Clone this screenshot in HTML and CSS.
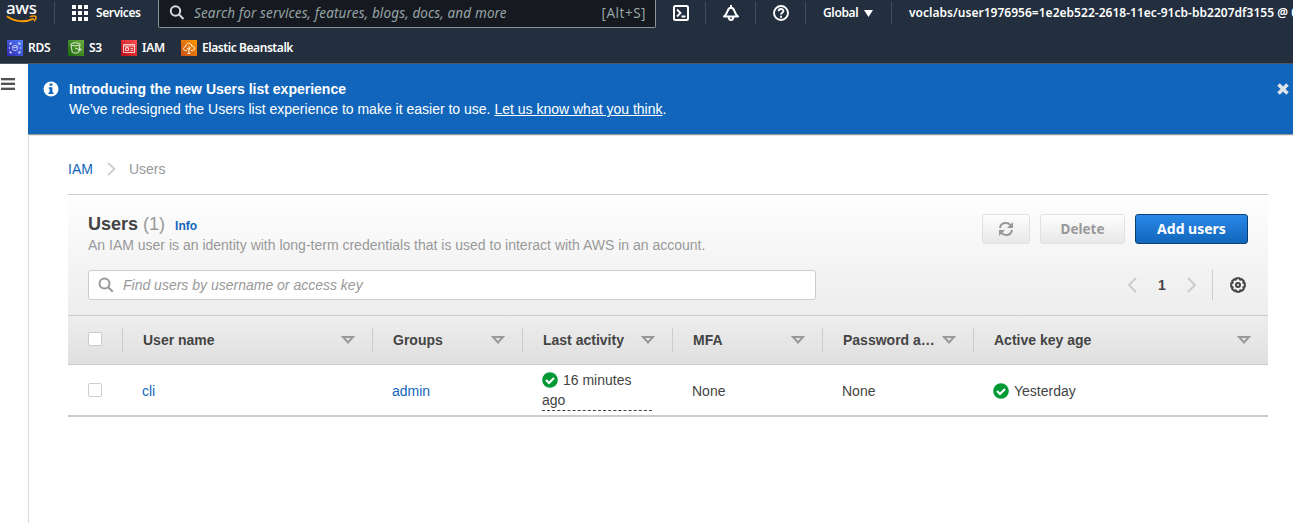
FILE: index.html
```html
<!DOCTYPE html>
<html lang="en">
<head>
<meta charset="utf-8">
<title>IAM - Users</title>
<link rel="stylesheet" href="styles.css">
</head>
<body>
<header class="topnav">
  <div class="nav-row">
    <div class="logo">
      <span class="logo-text">aws</span>
      <svg class="logo-smile" width="34" height="9" viewBox="0 0 34 9"><path d="M1 1.200C9 7.200 20 7.700 28.500 3.500" fill="none" stroke="#f90" stroke-width="2"/><path d="M24.500 1.800c2.500-1.200 5.600-1.200 6.200-.4.500 1-.4 3.400-1.900 5" fill="none" stroke="#f90" stroke-width="1.500"/></svg>
    </div>
    <i class="nav-line"></i>
    <div class="services">
      <svg width="16" height="16" viewBox="0 0 16 16" fill="#fff"><path d="M0 0h4v4H0zM6 0h4v4H6zM12 0h4v4h-4zM0 6h4v4H0zM6 6h4v4H6zM12 6h4v4h-4zM0 12h4v4H0zM6 12h4v4H6zM12 12h4v4h-4z"/></svg>
      <span class="t-services">Services</span>
    </div>
    <div class="search">
      <svg width="16" height="16" viewBox="0 0 16 16" fill="none" stroke="#d5dbdb" stroke-width="2"><circle cx="6.500" cy="6" r="4.700"/><path d="M10 9.500l4.500 4.500"/></svg>
      <span class="search-hint">Search for services, features, blogs, docs, and more</span>
      <span class="shortcut">[Alt+S]</span>
    </div>
    <div class="nav-icon"><svg width="16" height="16" viewBox="0 0 16 16" fill="none" stroke="#fff" stroke-width="2"><rect x="1" y="1" width="14" height="14" rx="1.500"/><path d="M4 4.500L7.500 8 4 11.500M8.500 11.500h4" stroke-width="1.800"/></svg></div>
    <i class="nav-line"></i>
    <div class="nav-icon"><svg width="16" height="16" viewBox="0 0 16 16" fill="none" stroke="#fff" stroke-width="2" stroke-linejoin="round"><path d="M1 11.500C3.500 9.500 4 7.800 4.600 6 5.200 3.900 6.300 2.700 8 2.700s2.800 1.200 3.400 3.300c.6 1.800 1.100 3.500 3.600 5.500z"/><path d="M8 0v2.500M5.700 12c0 4 4.600 4 4.600 0"/></svg></div>
    <i class="nav-line"></i>
    <div class="nav-icon"><svg width="16" height="16" viewBox="0 0 16 16" fill="none" stroke="#fff" stroke-width="1.900"><circle cx="8" cy="8" r="7"/><path d="M5.700 6.300c0-3 4.700-3 4.700-.2 0 1.700-2.400 1.500-2.400 3.400M8 10.800v2"/></svg></div>
    <i class="nav-line"></i>
    <div class="region"><span class="t-global">Global</span><svg width="9" height="7" viewBox="0 0 8 7" preserveAspectRatio="none" fill="#fff"><path d="M0 0h8L4 7z"/></svg></div>
    <i class="nav-line"></i>
    <div class="account">voclabs/user1976956=1e2eb522-2618-11ec-91cb-bb2207df3155 @ 0</div>
  </div>
  <nav class="favorites">
    <a class="fav fav-rds"><svg class="tile rds" viewBox="0 0 16 16" fill="none" stroke="#fff" stroke-opacity=".85" stroke-width=".8"><path d="M3 5V3h2M11 3h2v2M13 11v2h-2M5 13H3v-2M3 3l1.500 1.500M13 3l-1.500 1.500M13 13l-1.500-1.500M3 13l1.500-1.500M2.500 7v2M13.500 7v2"/><ellipse cx="8" cy="6.500" rx="2.200" ry="1"/><path d="M5.800 6.500v3c0 1.300 4.400 1.300 4.400 0v-3"/></svg><span>RDS</span></a>
    <a class="fav fav-s3"><svg class="tile s3" viewBox="0 0 16 16" fill="none" stroke="#fff" stroke-opacity=".9" stroke-width=".9"><ellipse cx="7.500" cy="4.300" rx="4.500" ry="1.500"/><path d="M3 4.300l1.200 7.800c1.200 1.300 5.400 1.300 6.600 0L12 4.300M7 8l5.500 2.200c1.600.3 1-1-.8-2"/></svg><span>S3</span></a>
    <a class="fav fav-iam"><svg class="tile iam" viewBox="0 0 16 16" fill="none" stroke="#fff" stroke-opacity=".85" stroke-width=".9"><path d="M2.500 4.500h11v8h-11zM2.500 6h11M4.500 8h3v2.500h-3zM5 8V7h2v1M9.500 8.500H12M9.500 10.500H12"/></svg><span>IAM</span></a>
    <a class="fav fav-eb"><svg class="tile eb" viewBox="0 0 16 16" fill="none" stroke="#fff" stroke-width=".9"><path d="M6 10.500H4.500c-2.600-.2-2.500-3.500 0-3.800C4.800 2.500 10 2.200 10.700 6c3.400-.2 3.800 4.300.8 4.500H10M8 6.500v6.800M8 10L6 8.300M8 9l2-1.500M6.500 13.300h3"/></svg><span>Elastic Beanstalk</span></a>
  </nav>
</header>
<div class="shell">
  <aside class="rail"><svg width="14" height="12" viewBox="0 0 14 12" fill="#545051"><path d="M0 0h14v2H0zM0 5h14v2H0zM0 10h14v2H0z"/><path d="M0 2h14v1H0zM0 4h14v1H0zM0 9h14v1H0z" fill-opacity=".35"/></svg></aside>
  <main class="main">
    <section class="banner">
      <svg class="info-icon" width="16" height="16" viewBox="0 0 16 16"><circle cx="8" cy="8" r="7.500" fill="#fff"/><path d="M6.600 2.500h2.800v2.200H6.600zM5.800 6.200h3.600v5h1v1.900H5.600v-1.900h1V8h-.8z" fill="#1166bb"/></svg>
      <div class="banner-text"><strong>Introducing the new Users list experience</strong><p>We’ve redesigned the Users list experience to make it easier to use. <a>Let us know what you think</a>.</p></div>
      <svg class="close" width="12" height="12" viewBox="0 0 12 12"><path d="M1.500 1.500l9 9M10.500 1.500l-9 9" stroke="#dfe3e8" stroke-width="3.600"/></svg>
    </section>
    <div class="content">
      <nav class="crumbs"><a>IAM</a><svg width="9" height="14" viewBox="0 0 9 14" fill="none" stroke="#ccc" stroke-width="1.800"><path d="M1 .8L7.500 7 1 13.200"/></svg><span>Users</span></nav>
      <section class="panel">
        <div class="panel-head">
          <div class="title-row">
            <div>
              <h1>Users <span class="count">(1)</span><a class="info">Info</a></h1>
              <p class="desc">An IAM user is an identity with long-term credentials that is used to interact with AWS in an account.</p>
            </div>
            <div class="actions">
              <button class="btn refresh"><svg width="16" height="16" viewBox="0 0 16 16" fill="none" stroke="#999" stroke-width="2"><path d="M2 7C2.800 1.500 9.500.2 13 4.500M14 9c-.8 5.500-7.500 6.800-11 2.500"/><path d="M15 1v6H9zM1 15V9h6z" fill="#999" stroke="none"/></svg></button>
              <button class="btn delete">Delete</button>
              <button class="btn primary">Add users</button>
            </div>
          </div>
          <div class="filter-row">
            <div class="filter"><svg width="16" height="16" viewBox="0 0 16 16" fill="none" stroke="#999" stroke-width="2"><circle cx="6.500" cy="6.500" r="5"/><path d="M10.200 10.200l4.600 4.600"/></svg><span>Find users by username or access key</span></div>
            <div class="pager">
              <svg width="10" height="16" viewBox="0 0 10 16" fill="none" stroke="#ccc" stroke-width="2"><path d="M9 1L2 8l7 7"/></svg>
              <b>1</b>
              <svg width="10" height="16" viewBox="0 0 10 16" fill="none" stroke="#ccc" stroke-width="2"><path d="M1 1l7 7-7 7"/></svg>
              <i class="pager-line"></i>
              <svg width="16" height="16" viewBox="0 0 16 16" fill="none" stroke="#444" stroke-width="2" stroke-linejoin="round"><path d="M6.300 1.200h3.400l.5 1.500 1.600-.6 2.100 2.100-.6 1.600 1.500.5v3.400l-1.500.5.6 1.600-2.100 2.100-1.600-.6-.5 1.500H6.300l-.5-1.500-1.600.6-2.100-2.100.6-1.600-1.500-.5V6.300l1.500-.5-.6-1.600 2.100-2.100 1.600.6z"/><circle cx="8" cy="8" r="2"/></svg>
            </div>
          </div>
        </div>
        <div class="row head">
          <div class="check"><i class="box"></i></div>
          <div class="th"><span>User name</span><svg class="sort" viewBox="0 0 14 8"><path d="M2 1h10L7 6.500z"/></svg></div>
          <div class="th"><span>Groups</span><svg class="sort" viewBox="0 0 14 8"><path d="M2 1h10L7 6.500z"/></svg></div>
          <div class="th"><span>Last activity</span><svg class="sort" viewBox="0 0 14 8"><path d="M2 1h10L7 6.500z"/></svg></div>
          <div class="th"><span>MFA</span><svg class="sort" viewBox="0 0 14 8"><path d="M2 1h10L7 6.500z"/></svg></div>
          <div class="th"><span>Password a…</span><svg class="sort" viewBox="0 0 14 8"><path d="M2 1h10L7 6.500z"/></svg></div>
          <div class="th last"><span>Active key age</span><svg class="sort" viewBox="0 0 14 8"><path d="M2 1h10L7 6.500z"/></svg></div>
        </div>
        <div class="row body">
          <div class="check"><i class="box"></i></div>
          <div class="td"><a>cli</a></div>
          <div class="td"><a>admin</a></div>
          <div class="td"><div class="activity"><svg class="ok" viewBox="0 0 16 16"><circle cx="8" cy="8" r="7.800" fill="#093"/><path d="M4 8l3 3 5-5" fill="none" stroke="#fff" stroke-width="2.200"/></svg>16 minutes ago</div></div>
          <div class="td">None</div>
          <div class="td">None</div>
          <div class="td"><svg class="ok" viewBox="0 0 16 16"><circle cx="8" cy="8" r="7.800" fill="#093"/><path d="M4 8l3 3 5-5" fill="none" stroke="#fff" stroke-width="2.200"/></svg>Yesterday</div>
        </div>
      </section>
    </div>
  </main>
</div>
</body>
</html>
```

FILE: styles.css
```css
* { box-sizing: border-box; }
body { margin: 0; height: 523px; overflow: hidden; background: #fff; color: #444; font: 14px/20px "Liberation Sans", Arial, sans-serif; display: flex; flex-direction: column; }
svg { display: block; flex: none; }
h1, p { margin: 0; }
a { color: #1166bb; }

.topnav { flex: none; height: 64px; background: #232f3e; border-bottom: 1px solid #4f565e; color: #fff; font-family: "Noto Sans", sans-serif; font-weight: 600; font-size: 12px; overflow: hidden; }
.nav-row { display: flex; height: 28px; white-space: nowrap; align-items: flex-start; }
.logo { width: 54px; flex: none; padding-left: 6px; }
.logo-text { display: block; height: 15px; line-height: 15px; font-size: 17px; font-weight: 500; letter-spacing: -.4px; }
.logo-smile { width: 33px; }
.nav-line { flex: none; width: 1px; height: 22px; margin-top: 2px; background: #414d5c; }
.services { width: 103px; flex: none; display: flex; padding: 5px 0 0 17px; gap: 8px; }
.services span { line-height: 16px; }
.t-services { letter-spacing: -.4px; }
.search { width: 498px; height: 28px; flex: none; background: #16191f; border: solid #879596; border-width: 0 1px 1px; border-radius: 0 0 2px 2px; display: flex; align-items: center; padding: 0 9px 1px 10px; color: #95a5a6; font-weight: 400; }
.search-hint { margin-left: 9px; font-size: 13.500px; font-style: italic; letter-spacing: .14px; }
.shortcut { margin-left: auto; font-size: 13.500px; letter-spacing: .5px; }
.nav-icon { width: 49px; flex: none; padding: 5px 0 0 17px; }
.region { width: 85px; flex: none; display: flex; align-items: center; height: 26px; padding-left: 17px; gap: 6px; }
.t-global { letter-spacing: -.35px; }
.account { line-height: 26px; padding-left: 17px; letter-spacing: .02px; }
.favorites { display: flex; padding: 12px 0 0 7px; }
.fav { display: flex; gap: 5px; color: #fff; line-height: 16px; white-space: nowrap; letter-spacing: -.3px; }
.tile { width: 16px; height: 16px; }
.fav-rds, .fav-eb { flex: none; }
.fav-rds { width: 61px; }
.fav-s3 { width: 53px; }
.fav-iam { width: 60px; }
.fav-eb { letter-spacing: -.43px; }
.rds { background: linear-gradient(45deg, #2e27ad, #527fff); }
.s3 { background: linear-gradient(45deg, #1b660f, #6cae3e); }
.iam { background: linear-gradient(45deg, #bd0816, #ff5252); }
.eb { background: linear-gradient(45deg, #c8511b, #f90); }

.shell { flex: 1; display: flex; }
.rail { width: 28px; flex: none; padding: 14px 0 0 1px; }
.main { flex: 1; border-left: 1px solid #d5dbdb; }
.banner { height: 71px; margin-left: -1px; padding: 15px 4px 0 15px; background: #1166bb; border-bottom: 1px solid #999; box-shadow: 0 1px 0 #e6e6e6; display: flex; color: #fff; }
.info-icon { margin-top: 2px; }
.banner-text { margin-left: 10px; flex: 1; }
.banner-text strong { display: block; }
.banner-text a { color: #fff; text-decoration: underline; }
.close { margin-top: 4px; }
.content { padding: 24px 25px 0 39px; }
.crumbs { display: flex; align-items: center; height: 20px; color: #999; }
.crumbs svg { margin: 0 13px 0 14px; }
.panel { margin-top: 15px; border-top: 1px solid #ccc; }
.panel-head { height: 120px; padding: 19px 20px 0; background: linear-gradient(#fefefe, #ededed); }
.title-row { display: flex; justify-content: space-between; }
h1 { font-size: 18px; line-height: 21px; height: 21px; }
.count { font-weight: 400; color: #999; }
.info { margin-left: 10px; font-size: 12px; }
.desc { color: #999; }
.actions { display: flex; gap: 10px; }
.btn { height: 30px; padding: 0; border: 1px solid #e1e1e1; border-radius: 3px; color: #999; background: linear-gradient(#fdfdfd, #e8e8e8); font: 700 14px/20px "Noto Sans", sans-serif; display: flex; align-items: center; justify-content: center; }
.refresh { width: 48px; }
.delete { width: 85px; font-size: 13.500px; }
.primary { width: 113px; color: #fff; background: linear-gradient(#2b88e8, #1166bb); border-color: #0d3f75; }
.filter-row { margin-top: 15px; display: flex; justify-content: space-between; }
.filter { width: 728px; height: 30px; border: 1px solid #ccc; border-radius: 3px; background: #fff; color: #999; font-style: italic; display: flex; align-items: center; gap: 9px; padding-left: 9px; }
.pager { display: flex; align-items: center; height: 30px; padding-right: 2px; }
.pager b { width: 50px; text-align: center; }
.pager-line { height: 30px; width: 1px; background: #ccc; margin: 0 17px 0 15px; }

.row { display: grid; grid-template-columns: 54px 250px 150px 150px 150px 151px 1fr; align-items: center; }
.head { height: 50px; border: solid #ccc; border-width: 1px 0; background: linear-gradient(#eee, #dfdfdf); font-weight: 700; }
.body { height: 52px; border-bottom: 2px solid #ccc; }
.check { padding-left: 20px; }
.box { display: block; width: 14px; height: 14px; margin-bottom: 2px; border: 1px solid #ccc; border-radius: 2px; background: #fff; }
.body .box { margin-bottom: 0; }
.th { height: 24px; border-left: 1px solid #ccc; padding: 0 17px 0 20px; display: flex; align-items: center; justify-content: space-between; white-space: nowrap; }
.sort { width: 14px; height: 8px; fill: none; stroke: #999; stroke-width: 2; }
.td { padding: 2px 20px 0; display: flex; align-items: center; }
.activity { width: 110px; height: 41px; padding-bottom: 1px; margin-top: -1px; border-bottom: 1px dashed #444; }
.ok { width: 16px; height: 16px; margin-right: 5px; }
.activity .ok { display: inline-block; vertical-align: -3px; }
```
